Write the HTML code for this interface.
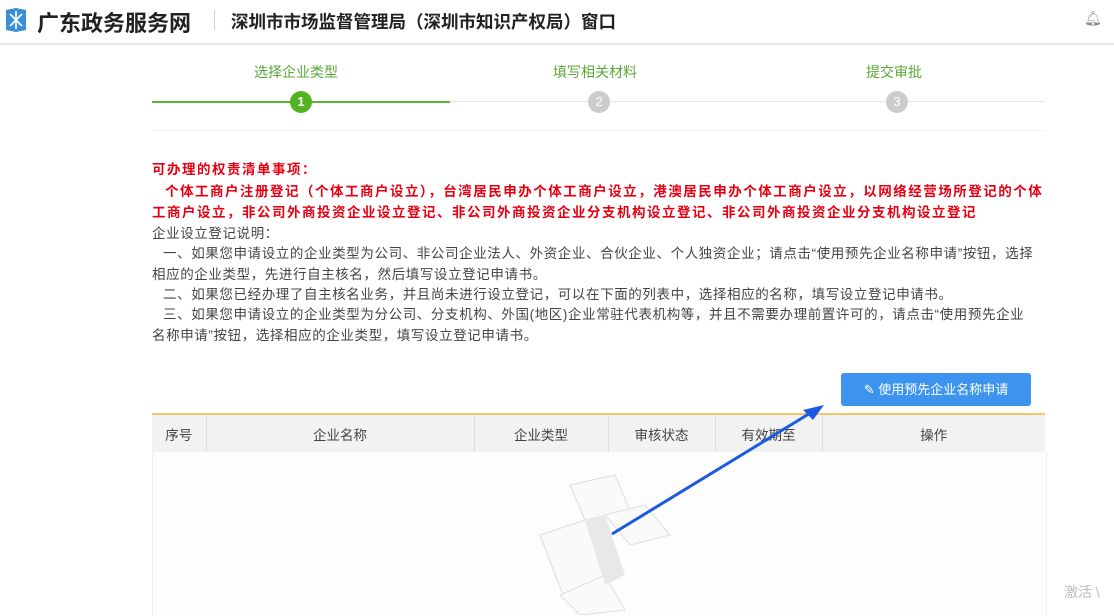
<!DOCTYPE html>
<html><head><meta charset="utf-8"><style>
body{margin:0;width:1114px;height:616px;background:#fff;font-family:"Liberation Sans","Noto Sans CJK SC",sans-serif;position:relative;overflow:hidden}
.a{position:absolute;white-space:nowrap}
.red{color:#e60012;font-weight:bold;font-size:13.5px;letter-spacing:1.5px}
.blk{color:#444;font-size:13.5px;letter-spacing:0.6px}
th{font-weight:normal;padding:0}
</style></head><body>
<svg class="a" style="left:4px;top:6px" width="24" height="28"><path d="M2 4 L12 2 L22 4 L22 24 L12 26 L2 24Z" fill="#3a8fd6"/><path d="M6 8 L18 20 M18 8 L6 20 M12 5 V23" stroke="#fff" stroke-width="1.6"/></svg>
<div class="a" style="left:37px;top:6px;font-size:22px;font-weight:bold;color:#222">广东政务服务网</div>
<div class="a" style="left:214px;top:10px;width:1px;height:20px;background:#ccc"></div>
<div class="a" style="left:231px;top:9px;font-size:17.5px;font-weight:bold;color:#222">深圳市市场监督管理局（深圳市知识产权局）窗口</div>
<div class="a" style="left:1084px;top:10px;font-size:14px;color:#888">🔔︎</div>
<div class="a" style="left:0;top:43px;width:1114px;height:2px;background:#e8e8e8"></div>
<div class="a" style="left:254px;top:62px;font-size:14px;color:#5aa83a">选择企业类型</div>
<div class="a" style="left:553px;top:62px;font-size:14px;color:#5aa83a">填写相关材料</div>
<div class="a" style="left:866px;top:62px;font-size:14px;color:#5aa83a">提交审批</div>
<div class="a" style="left:152px;top:101px;width:298px;height:2px;background:#5cb531"></div>
<div class="a" style="left:450px;top:101px;width:595px;height:1px;background:#e3e3e3"></div>
<div class="a" style="left:290px;top:91px;width:22px;height:22px;border-radius:50%;background:#52b320;color:#fff;font-size:13px;text-align:center;line-height:22px;font-weight:bold">1</div>
<div class="a" style="left:588px;top:91px;width:22px;height:22px;border-radius:50%;background:#ccc;color:#fff;font-size:13px;text-align:center;line-height:22px">2</div>
<div class="a" style="left:886px;top:91px;width:22px;height:22px;border-radius:50%;background:#ccc;color:#fff;font-size:13px;text-align:center;line-height:22px">3</div>
<div class="a" style="left:152px;top:130px;width:893px;height:1px;background:#f0f0f0"></div>
<div class="a red" style="left:152px;top:158px">可办理的权责清单事项：</div>
<div class="a red" style="left:165px;top:180px">个体工商户注册登记（个体工商户设立），台湾居民申办个体工商户设立，港澳居民申办个体工商户设立，以网络经营场所登记的个体</div>
<div class="a red" style="left:152px;top:201px">工商户设立，非公司外商投资企业设立登记、非公司外商投资企业分支机构设立登记、非公司外商投资企业分支机构设立登记</div>
<div class="a blk" style="left:152px;top:222px">企业设立登记说明：</div>
<div class="a blk" style="left:163px;top:242px">一、如果您申请设立的企业类型为公司、非公司企业法人、外资企业、合伙企业、个人独资企业；请点击“使用预先企业名称申请”按钮，选择</div>
<div class="a blk" style="left:152px;top:263px">相应的企业类型，先进行自主核名，然后填写设立登记申请书。</div>
<div class="a blk" style="left:163px;top:283px">二、如果您已经办理了自主核名业务，并且尚未进行设立登记，可以在下面的列表中，选择相应的名称，填写设立登记申请书。</div>
<div class="a blk" style="left:163px;top:303px">三、如果您申请设立的企业类型为分公司、分支机构、外国(地区)企业常驻代表机构等，并且不需要办理前置许可的，请点击“使用预先企业</div>
<div class="a blk" style="left:152px;top:324px">名称申请”按钮，选择相应的企业类型，填写设立登记申请书。</div>
<div class="a" style="left:841px;top:373px;width:190px;height:33px;background:#3d94ee;border-radius:3px;color:#fff;font-size:13px;line-height:33px;text-align:center">✎ 使用预先企业名称申请</div>
<div class="a" style="left:152px;top:413px;width:893px;height:2px;background:#f3c766"></div>
<table class="a" style="left:152px;top:415px;width:893px;table-layout:fixed;border-collapse:collapse;font-size:13.5px;color:#444;background:#f2f2f2;height:37px">
<colgroup><col style="width:54px"><col style="width:268px"><col style="width:134px"><col style="width:107px"><col style="width:107px"><col style="width:223px"></colgroup>
<tr><th style="border-right:1px solid #ddd">序号</th><th style="border-right:1px solid #ddd">企业名称</th><th style="border-right:1px solid #ddd">企业类型</th><th style="border-right:1px solid #ddd">审核状态</th><th style="border-right:1px solid #ddd">有效期至</th><th>操作</th></tr></table>
<div class="a" style="left:152px;top:452px;width:893px;height:164px;border-left:1px solid #eee;border-right:1px solid #eee;background:#fdfdfe"></div>
<svg class="a" style="left:520px;top:465px" width="160" height="150"><g fill="#fafafa" stroke="#ddd"><path d="M50 20 L95 10 L110 45 L65 55Z"/><path d="M20 70 L65 55 L90 120 L45 135Z"/><path d="M85 50 L125 40 L150 70 L110 80Z"/><path d="M40 130 L85 110 L105 145 L60 150Z"/></g><path d="M65 55 L85 50 L105 110 L85 120Z" fill="#e8e8e8"/></svg>
<svg class="a" style="left:0;top:0" width="1114" height="616"><path d="M612 534 L812 412" stroke="#1a5be0" stroke-width="3"/><path d="M824 405 L803 410 L813 420Z" fill="#1a5be0"/></svg>
<div class="a" style="left:1064px;top:582px;font-size:14px;color:#bbb">激活 \</div>
</body></html>
